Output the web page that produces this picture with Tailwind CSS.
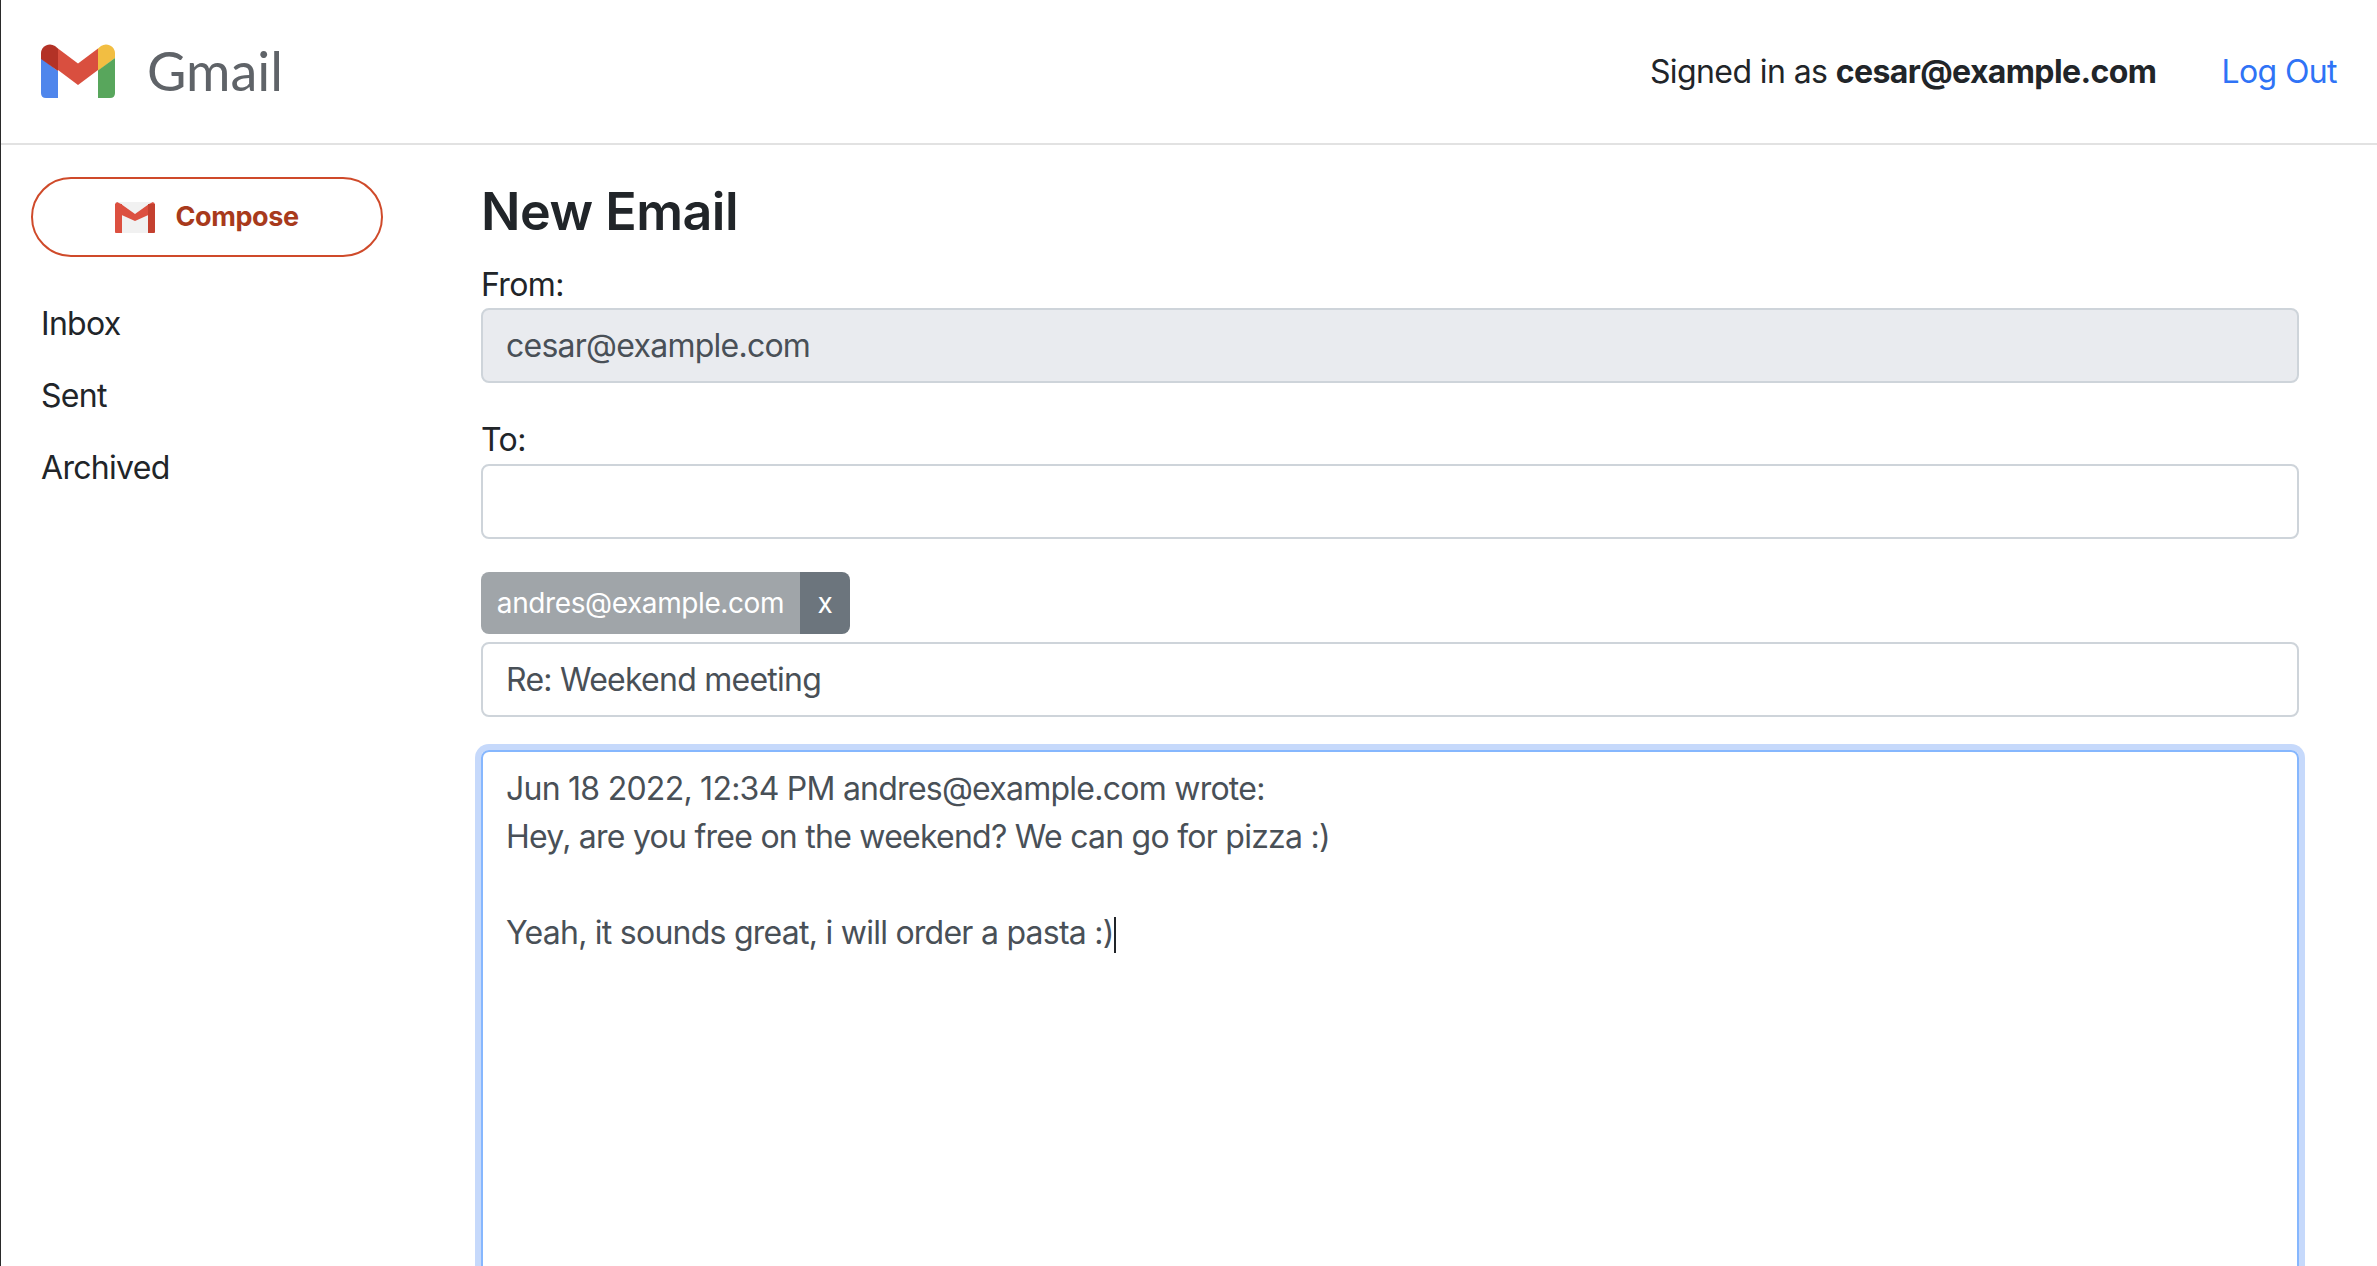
<!DOCTYPE html>
<html lang="en">
<head>
  <meta charset="UTF-8">
  <meta name="viewport" content="width=device-width, initial-scale=1.0">
  <title>Gmail - New Email</title>
  <script src="https://cdn.jsdelivr.net/npm/@tailwindcss/browser@4"></script>
</head>
<body class="h-screen overflow-hidden bg-white border-l border-[#2a2a2a] font-['Inter',sans-serif] text-[32px] leading-[48px] tracking-[-0.6px] text-[#212529]">
  <!-- header -->
  <header class="h-[145px] flex items-center justify-between border-b-2 border-[#e2e2e2] pl-[40px] pr-[40px]">
    <div class="flex items-center pb-[2px]">
      <svg class="w-[74px] h-[54px]" viewBox="0 0 74 54">
        <path fill="#4f86ec" d="M0 14 L17 27 V54 H5 Q0 54 0 49 Z"/>
        <path fill="#b33226" d="M0 15 V9 A9 9 0 0 1 14 2 L17 4.5 V27 Z"/>
        <path fill="#d94f3f" d="M17 4.5 L37 19.5 L57 4.5 V26 L37 41 L17 26 Z"/>
        <path fill="#f2be42" d="M57 4.5 L60 2 A9 9 0 0 1 74 9 V14 L57 27 Z"/>
        <path fill="#58a65c" d="M57 26.5 L74 14 V49 Q74 54 69 54 H57 Z"/>
      </svg>
      <span class="ml-[32px] font-['Lato',sans-serif] tracking-normal text-[54px] leading-none text-[#5f6368]">Gmail</span>
    </div>
    <div class="flex items-center">
      <span>Signed in as <b class="font-bold">cesar@example.com</b></span>
      <a href="#" class="ml-[65px] text-[#2f73f6]">Log Out</a>
    </div>
  </header>

  <div class="flex">
    <!-- sidebar -->
    <aside class="w-[480px] shrink-0 pl-[30px] pt-[32px]">
      <button class="w-[352px] h-[80px] flex items-center justify-center gap-[20px] rounded-full border-2 border-[#cf4a2a] bg-white">
        <svg class="w-[40px] h-[31px]" viewBox="0 0 40 31">
          <rect width="40" height="31" rx="1" fill="#f1f1f1"/>
          <path fill="#dc5040" d="M0 2 L2 0 L6 2 L20 12 L34 2 L38 0 L40 2 V10 L20 19 L0 10 Z"/>
          <path fill="#dc5040" d="M0 2 H7 V31 H1 Q0 31 0 30 Z"/>
          <path fill="#c4402f" d="M33 2 H40 V30 Q40 31 39 31 H33 Z"/>
        </svg>
        <span class="text-[27px] font-bold tracking-[-0.4px] text-[#a83a1c]">Compose</span>
      </button>
      <nav class="mt-[43px] ml-[10px] flex flex-col gap-[24px] tracking-[-0.7px]">
        <a href="#">Inbox</a>
        <a href="#">Sent</a>
        <a href="#">Archived</a>
      </nav>
    </aside>

    <!-- compose form -->
    <main class="w-[1818px] pt-[37px]">
      <h1 class="text-[52px] leading-[60px] font-semibold tracking-[-0.5px] mb-[19px]">New Email</h1>
      <label class="block h-[47px]" for="from">From:</label>
      <input id="from" disabled value="cesar@example.com" class="block w-full h-[75px] px-[23px] tracking-[-0.75px] rounded-[8px] border-2 border-[#ced4da] bg-[#e9ebef] text-[#495057]">
      <label class="block mt-[33px] h-[48px]" for="to">To:</label>
      <input id="to" class="block w-full h-[75px] px-[23px] rounded-[8px] border-2 border-[#ced4da]">
      <div class="mt-[33px] mb-[8px] inline-flex h-[62px] rounded-[8px] overflow-hidden text-[28px] tracking-[-0.4px] text-white">
        <span class="w-[319px] flex items-center justify-center bg-[#a0a5a9]">andres@example.com</span>
        <button class="w-[50px] flex items-center justify-center bg-[#6c757d] text-white">x</button>
      </div>
      <input value="Re: Weekend meeting" class="block w-full h-[75px] px-[23px] tracking-[-0.75px] rounded-[8px] border-2 border-[#ced4da] text-[#495057]">
      <div class="mt-[33px] h-[800px] px-[23px] pt-[13px] tracking-[-0.75px] rounded-[8px] border-2 border-[#86b7fe] ring-[6px] ring-[#c6d9fb] text-[#495057]">
        <p>Jun 18 2022, 12:34 PM andres@example.com wrote:</p>
        <p>Hey, are you free on the weekend? We can go for pizza :)</p>
        <p class="h-[48px]"></p>
        <p>Yeah, it sounds great, i will order a pasta :)<span class="inline-block w-[2px] h-[36px] align-middle bg-[#212529]"></span></p>
      </div>
    </main>
  </div>
</body>
</html>
